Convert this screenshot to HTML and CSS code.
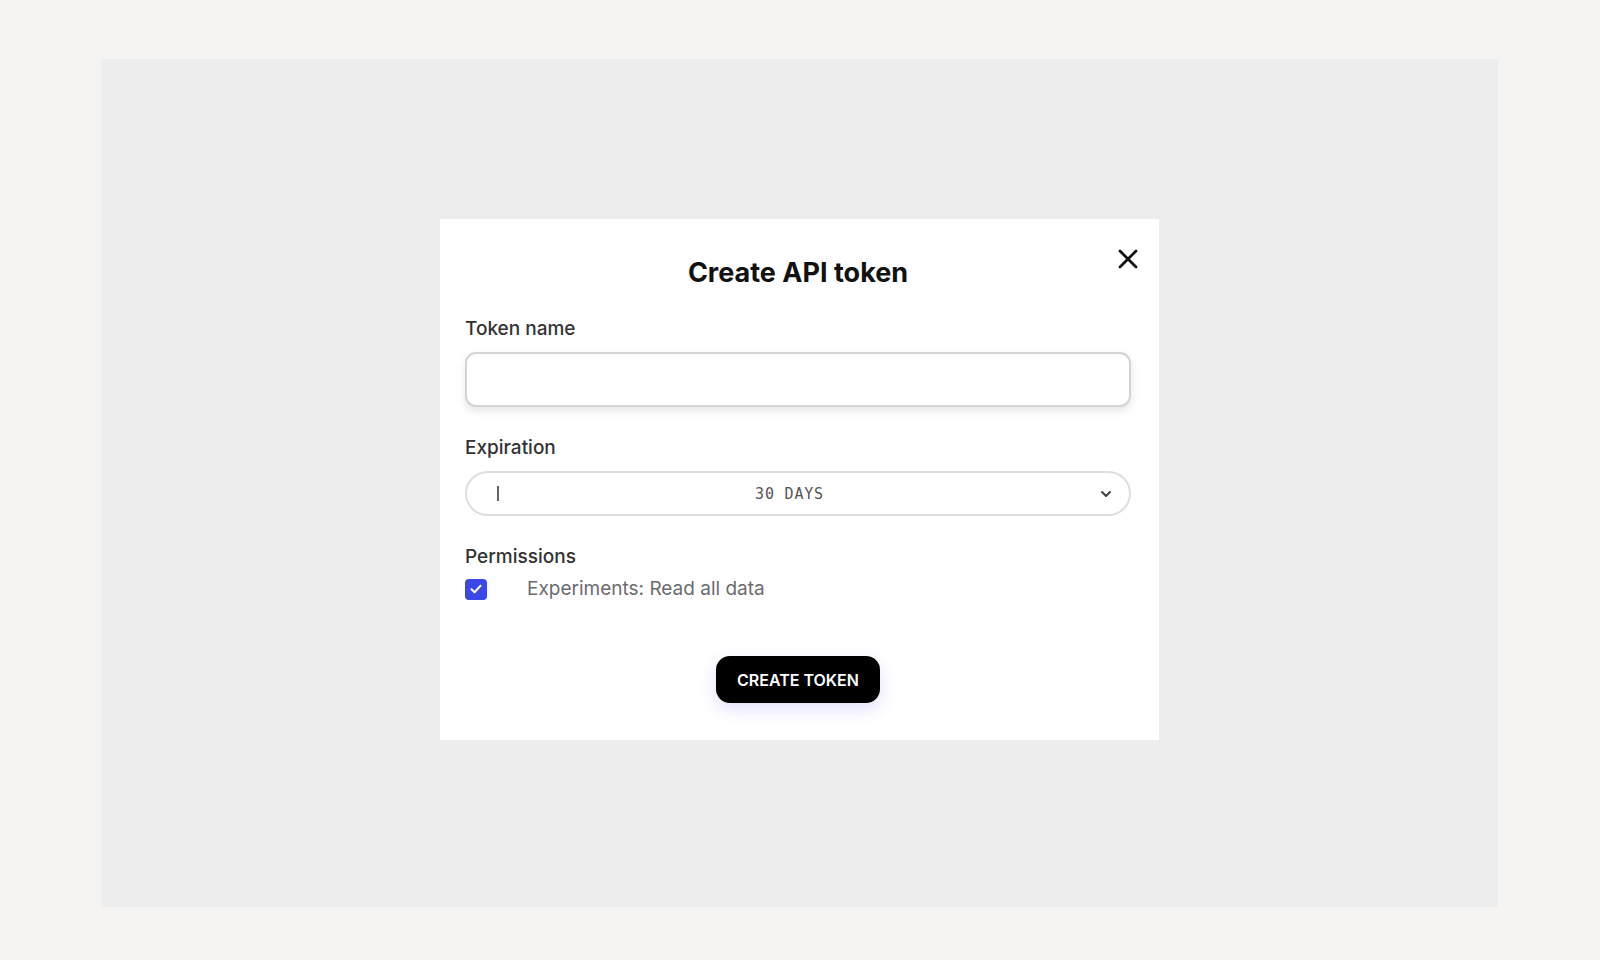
FILE: index.html
```html
<!DOCTYPE html>
<html lang="en">
<head>
    <meta charset="UTF-8">
    <meta name="viewport" content="width=device-width, initial-scale=1.0">
    <title>Create API token</title>
    <link rel="stylesheet" href="styles.css">
</head>
<body>
    <div class="backdrop">
        <div class="modal">
            <button class="close" type="button" aria-label="Close">
                <svg width="22" height="22" viewBox="0 0 22 22" fill="none" stroke="#111" stroke-width="2.8" stroke-linecap="round">
                    <path d="M3 3L19 19M19 3L3 19"/>
                </svg>
            </button>

            <h2 class="title">Create API token</h2>

            <form class="token-form">
                <div class="form-group">
                    <label for="tokenName">Token name</label>
                    <input type="text" id="tokenName" class="text-input">
                </div>

                <div class="form-group">
                    <label>Expiration</label>
                    <div class="select">
                        <span class="caret"></span>
                        <span class="select-value">30 DAYS</span>
                        <svg class="chevron" width="12" height="8" viewBox="0 0 12 8" fill="none" stroke="#444" stroke-width="2" stroke-linecap="round" stroke-linejoin="round">
                            <path d="M2 2l4 4 4-4"/>
                        </svg>
                    </div>
                </div>

                <div class="form-group">
                    <label>Permissions</label>
                    <div class="permission">
                        <span class="checkbox">
                            <svg width="12" height="10" viewBox="0 0 12 10" fill="none" stroke="#fff" stroke-width="2" stroke-linecap="round" stroke-linejoin="round">
                                <path d="M1.5 5.2l3 3 6-6.5"/>
                            </svg>
                        </span>
                        <span class="permission-text">Experiments: Read all data</span>
                    </div>
                </div>

                <div class="actions">
                    <button type="submit" class="button">CREATE TOKEN</button>
                </div>
            </form>
        </div>
    </div>
</body>
</html>
```

FILE: styles.css
```css
:root {
    --page: #f5f4f2;
    --backdrop: #ededed;
    --dark: #111111;
    --label: #333333;
    --muted: #6b6b70;
    --border: #d4d4d4;
    --accent: #3a48e8;
}

* {
    box-sizing: border-box;
    margin: 0;
    padding: 0;
}

body {
    font-family: 'Inter', 'Liberation Sans', sans-serif;
    background: var(--page);
    padding: 59px 102px 53px 101px;
    height: 960px;
}

.backdrop {
    background: var(--backdrop);
    height: 848px;
    display: flex;
    justify-content: center;
    align-items: flex-start;
    padding-top: 160px;
}

.modal {
    position: relative;
    background: #fff;
    width: 719px;
    padding: 38px 28px 37px 25px;
}

.close {
    position: absolute;
    top: 29px;
    right: 20px;
    border: none;
    background: none;
    cursor: pointer;
    display: flex;
}

.title {
    text-align: center;
    font-size: 27px;
    line-height: 32px;
    font-weight: 700;
    color: var(--dark);
    margin-bottom: 28px;
}

.form-group {
    margin-bottom: 29px;
}

label {
    display: block;
    font-size: 19px;
    line-height: 24px;
    font-weight: 500;
    color: var(--label);
    margin-bottom: 11px;
}

.text-input {
    width: 100%;
    height: 55px;
    border: 2px solid var(--border);
    border-radius: 11px;
    box-shadow: 0 4px 8px rgba(0, 0, 0, 0.1);
    font-family: inherit;
    font-size: 18px;
    padding: 0 16px;
}

.text-input:focus {
    outline: none;
}

.select {
    height: 45px;
    border: 2px solid #dedede;
    border-radius: 23px;
    display: flex;
    align-items: center;
    padding: 0 17px 0 30px;
}

.caret {
    width: 2px;
    height: 15px;
    background: #666;
}

.select-value {
    flex: 1;
    text-align: center;
    font-family: 'DejaVu Sans Mono', 'Liberation Mono', monospace;
    font-size: 15px;
    letter-spacing: 0.8px;
    color: #555;
    padding-right: 20px;
}

.permission {
    display: flex;
    align-items: center;
    gap: 40px;
    margin-top: -3px;
}

.checkbox {
    width: 22px;
    height: 21px;
    border-radius: 4px;
    background: var(--accent);
    display: flex;
    align-items: center;
    justify-content: center;
}

.permission-text {
    font-size: 19px;
    line-height: 24px;
    color: var(--muted);
}

.actions {
    display: flex;
    justify-content: center;
    margin-top: 55px;
}

.form-group:last-of-type {
    margin-bottom: 0;
}

.button {
    width: 164px;
    height: 47px;
    background: #000;
    color: #fff;
    border: none;
    border-radius: 14px;
    font-family: inherit;
    font-size: 16px;
    font-weight: 600;
    cursor: pointer;
    box-shadow: 0 6px 16px rgba(90, 80, 240, 0.18);
}
```
